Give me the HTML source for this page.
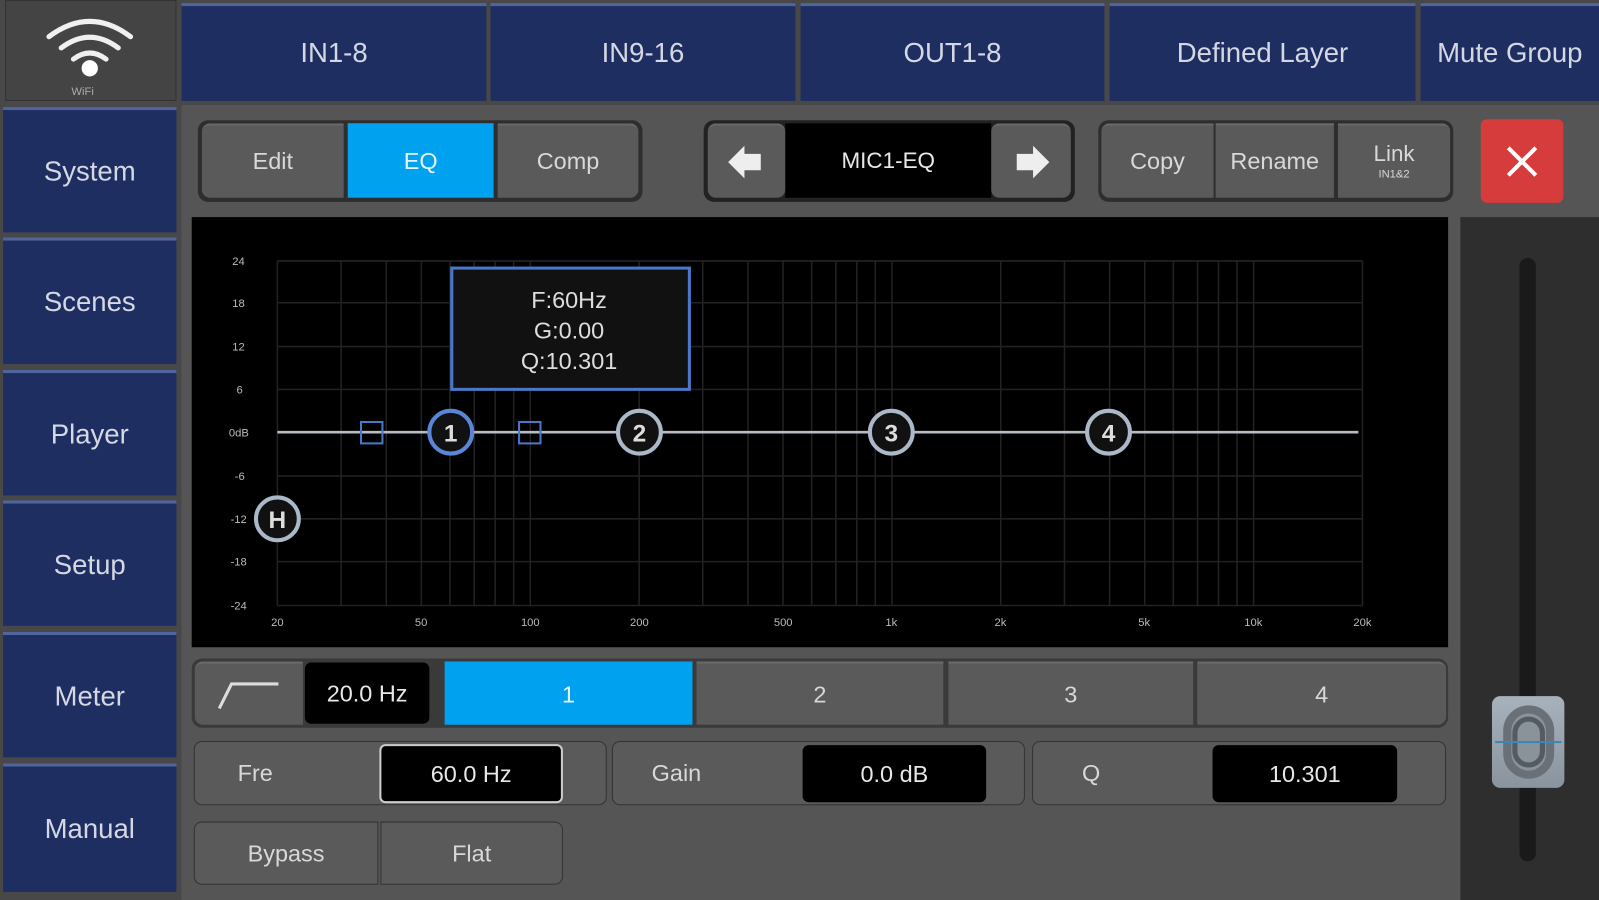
<!DOCTYPE html>
<html><head><meta charset="utf-8"><style>
*{box-sizing:border-box;margin:0;padding:0}
body{width:1599px;height:900px;overflow:hidden;background:#4a4a4a;font-family:"Liberation Sans",sans-serif}
#w{position:absolute;left:0;top:0;width:1568px;height:883px;transform:scale(1.0198,1.0193);transform-origin:0 0;background:#484848}
.a{position:absolute}
.nav{background:#1f2e60;border-top:3px solid #50659e;color:#d4d8e4;font-size:27px;display:flex;align-items:center;justify-content:center}
.btn{position:absolute;background:#5a5a5a;color:#d8d8d8;font-size:23px;display:flex;align-items:center;justify-content:center;border-top:2px solid #6a6a6a}
.grp{position:absolute;background:#2e2e2e;border-radius:10px}
.blk{position:absolute;background:#000;color:#e8e8e8;font-size:23px;display:flex;align-items:center;justify-content:center;border-radius:6px}
</style></head><body><div id="w">
<div class="a" style="left:178px;top:103px;width:1390px;height:780px;background:#555"></div>
<div class="a" style="left:1432px;top:213px;width:136px;height:670px;background:#2e2e2e"></div>
<div class="a" style="left:5px;top:0;width:168px;height:99px;background:#444;border:1px solid #333"></div>
<svg class="a" style="left:40px;top:14px" width="96" height="64" viewBox="0 0 96 64"><g fill="none" stroke="#f0f0f0" stroke-width="5" stroke-linecap="round"><path d="M8 22 Q48 -8 88 22"/><path d="M20 33 Q48 12 76 33"/><path d="M32 44 Q48 32 64 44"/></g><circle cx="48" cy="53" r="8" fill="#fff"/></svg>
<div class="a" style="left:70px;top:84px;font-size:11px;color:#aaa">WiFi</div>
<div class="a nav" style="left:178px;top:3px;width:299px;height:96px">IN1-8</div>
<div class="a nav" style="left:481px;top:3px;width:299px;height:96px">IN9-16</div>
<div class="a nav" style="left:785px;top:3px;width:298px;height:96px">OUT1-8</div>
<div class="a nav" style="left:1088px;top:3px;width:300px;height:96px">Defined Layer</div>
<div class="a nav" style="left:1393px;top:3px;width:175px;height:96px">Mute Group</div>
<div class="a nav" style="left:3px;top:105px;width:170px;height:123px">System</div>
<div class="a nav" style="left:3px;top:233px;width:170px;height:124px">Scenes</div>
<div class="a nav" style="left:3px;top:363px;width:170px;height:123px">Player</div>
<div class="a nav" style="left:3px;top:491px;width:170px;height:123px">Setup</div>
<div class="a nav" style="left:3px;top:620px;width:170px;height:123px">Meter</div>
<div class="a nav" style="left:3px;top:749px;width:170px;height:126px">Manual</div>
<div class="grp" style="left:194px;top:118px;width:436px;height:80px"></div>
<div class="btn" style="left:198px;top:121px;width:139px;height:73px;border-radius:8px 0 0 8px">Edit</div>
<div class="btn" style="left:341px;top:121px;width:143px;height:73px;background:#00a2f0;border-top-color:#00a2f0;color:#e8f4ff">EQ</div>
<div class="btn" style="left:488px;top:121px;width:138px;height:73px;border-radius:0 8px 8px 0">Comp</div>
<div class="grp" style="left:690px;top:118px;width:364px;height:80px;background:#222"></div>
<div class="a" style="left:770px;top:121px;width:202px;height:73px;background:#000;color:#e8e8e8;font-size:22px;display:flex;align-items:center;justify-content:center">MIC1-EQ</div>
<div class="btn" style="left:694px;top:121px;width:76px;height:73px;border-radius:8px"><svg width="40" height="36" viewBox="0 0 40 36"><path d="M2 18 L18 2 L18 10 L34 10 L34 26 L18 26 L18 34Z" fill="#eee"/></svg></div>
<div class="btn" style="left:972px;top:121px;width:78px;height:73px;border-radius:8px"><svg width="40" height="36" viewBox="0 0 40 36"><path d="M38 18 L22 2 L22 10 L6 10 L6 26 L22 26 L22 34Z" fill="#eee"/></svg></div>
<div class="grp" style="left:1077px;top:118px;width:348px;height:80px"></div>
<div class="btn" style="left:1080px;top:121px;width:110px;height:73px;border-radius:8px 0 0 8px">Copy</div>
<div class="btn" style="left:1192px;top:121px;width:116px;height:73px">Rename</div>
<div class="btn" style="left:1312px;top:121px;width:110px;height:73px;border-radius:0 8px 8px 0;flex-direction:column;line-height:1"><span style="font-size:22px">Link</span><span style="font-size:11px;margin-top:4px">IN1&amp;2</span></div>
<div class="a" style="left:1452px;top:117px;width:81px;height:82px;background:#d63c3c;border-radius:6px"><svg width="81" height="82"><path d="M27 28 L54 55 M54 28 L27 55" stroke="#fff" stroke-width="4"/></svg></div>
<div class="a" style="left:188px;top:213px;width:1232px;height:422px;background:#000"></div>
<svg class="a" style="left:0;top:0" width="1568" height="883" font-family="Liberation Sans" >
<g stroke="#222" stroke-width="1.5">
<path d="M272 256V594M334.5 256V594M378.8 256V594M413.2 256V594M441.2 256V594M465 256V594M485.5 256V594M503.7 256V594M520 256V594M626.7 256V594M689.1 256V594M733.4 256V594M767.8 256V594M795.9 256V594M819.6 256V594M840.2 256V594M858.3 256V594M874.6 256V594M981.3 256V594M1043.8 256V594M1088.1 256V594M1122.5 256V594M1150.5 256V594M1174.3 256V594M1194.8 256V594M1213 256V594M1229.3 256V594M1336 256V594"/>
<path d="M272 256H1336M272 297H1336M272 340H1336M272 382H1336M272 467H1336M272 509H1336M272 551H1336M272 594H1336"/>
</g>
<g fill="#bbb" font-size="11" text-anchor="end">
<text x="240" y="260">24</text><text x="240" y="301">18</text><text x="240" y="344">12</text><text x="238" y="386">6</text><text x="244" y="428">0dB</text><text x="240" y="471">-6</text><text x="242" y="513">-12</text><text x="242" y="555">-18</text><text x="242" y="598">-24</text>
</g>
<g fill="#bbb" font-size="11" text-anchor="middle">
<text x="272" y="614">20</text><text x="413" y="614">50</text><text x="520" y="614">100</text><text x="627" y="614">200</text><text x="768" y="614">500</text><text x="874" y="614">1k</text><text x="981" y="614">2k</text><text x="1122" y="614">5k</text><text x="1229" y="614">10k</text><text x="1336" y="614">20k</text>
</g>
<path d="M272 424H1332" stroke="#b8bcc4" stroke-width="2.5"/>
<rect x="354" y="414" width="21" height="21" fill="none" stroke="#4a78c8" stroke-width="2"/>
<rect x="509" y="414" width="21" height="21" fill="none" stroke="#4a78c8" stroke-width="2"/>
<g font-size="24" font-weight="bold" text-anchor="middle" fill="#ddd">
<circle cx="442" cy="424" r="21" fill="#111" stroke="#5a86d8" stroke-width="4"/><text x="442" y="433">1</text>
<circle cx="627" cy="424" r="21" fill="#111" stroke="#aab8c8" stroke-width="4"/><text x="627" y="433">2</text>
<circle cx="874" cy="424" r="21" fill="#111" stroke="#aab8c8" stroke-width="4"/><text x="874" y="433">3</text>
<circle cx="1087" cy="424" r="21" fill="#111" stroke="#aab8c8" stroke-width="4"/><text x="1087" y="433">4</text>
<circle cx="272" cy="509" r="21" fill="#111" stroke="#aab8c8" stroke-width="4"/><text x="272" y="518">H</text>
</g>
<rect x="443" y="263" width="233" height="119" fill="#111" stroke="#4a78c8" stroke-width="3"/>
<g fill="#ddd" font-size="23" text-anchor="middle"><text x="558" y="302">F:60Hz</text><text x="558" y="332">G:0.00</text><text x="558" y="362">Q:10.301</text></g>
</svg>
<div class="grp" style="left:188px;top:646px;width:1232px;height:68px;background:#3a3a3a"></div>
<div class="btn" style="left:191px;top:649px;width:106px;height:62px;border-radius:8px 0 0 8px"><svg width="70" height="36"><path d="M6 32 L18 8 H64" fill="none" stroke="#ddd" stroke-width="3"/></svg></div>
<div class="blk" style="left:299px;top:650px;width:122px;height:60px">20.0 Hz</div>
<div class="btn" style="left:436px;top:649px;width:243px;height:62px;background:#00a2f0;border-top-color:#00a2f0;color:#e8f4ff">1</div>
<div class="btn" style="left:683px;top:649px;width:242px;height:62px">2</div>
<div class="btn" style="left:930px;top:649px;width:240px;height:62px">3</div>
<div class="btn" style="left:1174px;top:649px;width:244px;height:62px;border-radius:0 8px 8px 0">4</div>
<div class="btn" style="left:190px;top:727px;width:405px;height:63px;border-radius:8px;justify-content:flex-start;padding-left:42px;border:1px solid #333">Fre</div>
<div class="blk" style="left:372px;top:730px;width:180px;height:58px;border:2px solid #ccc">60.0 Hz</div>
<div class="btn" style="left:600px;top:727px;width:405px;height:63px;border-radius:8px;justify-content:flex-start;padding-left:38px;border:1px solid #333">Gain</div>
<div class="blk" style="left:787px;top:731px;width:180px;height:56px">0.0 dB</div>
<div class="btn" style="left:1012px;top:727px;width:406px;height:63px;border-radius:8px;justify-content:flex-start;padding-left:48px;border:1px solid #333">Q</div>
<div class="blk" style="left:1189px;top:731px;width:181px;height:56px">10.301</div>
<div class="btn" style="left:190px;top:806px;width:181px;height:62px;border-radius:8px 0 0 8px;border:1px solid #333">Bypass</div>
<div class="btn" style="left:373px;top:806px;width:179px;height:62px;border-radius:0 8px 8px 0;border:1px solid #333">Flat</div>
<div class="a" style="left:1490px;top:253px;width:16px;height:592px;background:#1a1a1a;border-radius:8px"></div>
<div class="a" style="left:1463px;top:683px;width:71px;height:90px;border-radius:8px;background:linear-gradient(#a8b2bc,#8a949e)"></div>
<div class="a" style="left:1474px;top:692px;width:50px;height:72px;border-radius:25px;border:8px solid #6a7078;background:#8a929a"></div>
<div class="a" style="left:1483px;top:703px;width:32px;height:50px;border-radius:16px;border:5px solid #555b62"></div>
<div class="a" style="left:1466px;top:727px;width:65px;height:2px;background:#3a88b8"></div>
</div></body></html>
